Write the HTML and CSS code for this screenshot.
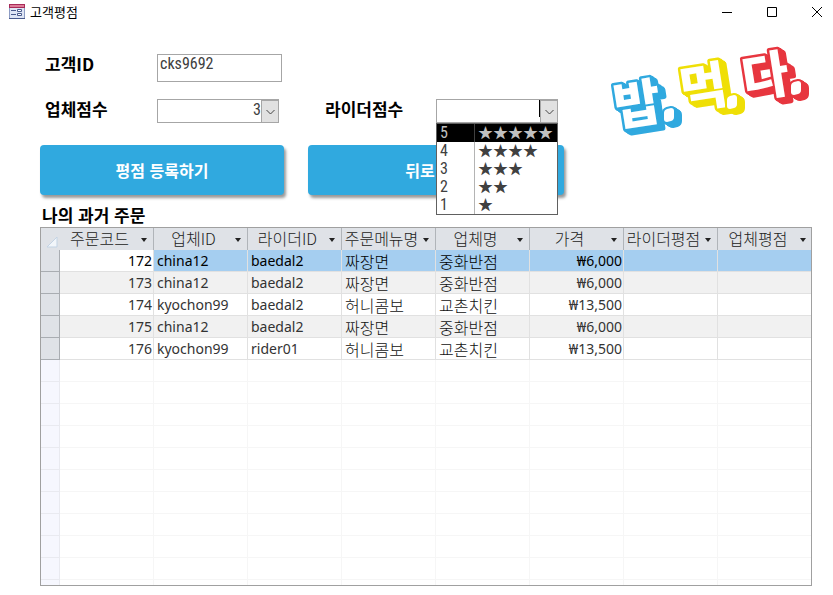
FILE: index.html
```html
<!DOCTYPE html>
<html lang="ko">
<head>
<meta charset="utf-8">
<meta name="viewport" content="width=device-width, initial-scale=1">
<title>고객평점</title>
<link rel="stylesheet" href="styles.css">
</head>
<body>
<header class="titlebar">
  <svg class="app-icon" width="16" height="16" viewBox="0 0 16 16" aria-hidden="true">
    <path fill="#dfe6f5" stroke="#8d9cc4" d="M.5 3.500h15v11H.5z"/>
    <path fill="#a82a58" d="M0 0h16v4H0z"/>
    <path fill="#dd7c98" d="M1 1h14v2H1z"/>
    <path fill="#4a5b8c" d="M2 6h5v1H2zM2 10h5v1H2zM0 14h16v1H0z"/>
    <path fill="#fff" stroke="#4a5b8c" d="M8.500 5.500h4v2h-4zM8.500 9.500h4v2h-4z"/>
  </svg>
  <h1 class="title">고객평점</h1>
  <div class="window-buttons">
    <button type="button" aria-label="최소화"><svg width="12" height="12" viewBox="0 0 12 12"><path d="M1 6.500h10"/></svg></button>
    <button type="button" aria-label="최대화"><svg width="12" height="12" viewBox="0 0 12 12"><path d="M1.500 1.500h9v9h-9z"/></svg></button>
    <button type="button" aria-label="닫기"><svg width="12" height="12" viewBox="0 0 12 12"><path d="M1 1l10 10M11 1L1 11"/></svg></button>
  </div>
</header>
<main>
  <div class="top">
    <form class="rating">
      <div class="fields">
        <label for="customer">고객ID</label>
        <input id="customer" class="field customer" type="text" value="cks9692">
        <label class="row-start" for="store-score">업체점수</label>
        <span class="combo">
          <select id="store-score" class="field">
            <option>5</option><option>4</option><option selected>3</option><option>2</option><option>1</option>
          </select>
          <span class="arrow"><svg width="9" height="6" viewBox="0 0 9 6"><path d="M.5 1l4 4 4-4"/></svg></span>
        </span>
        <label class="second" for="rider-score">라이더점수</label>
        <div class="combo">
          <input id="rider-score" class="field" type="text" role="combobox" aria-expanded="true" aria-controls="scores">
          <span class="caret"></span>
          <button type="button" class="arrow" aria-label="목록 열기"><svg width="9" height="6" viewBox="0 0 9 6"><path d="M.5 1l4 4 4-4"/></svg></button>
          <ul id="scores" class="menu" role="listbox">
            <li role="option" aria-selected="true"><span>5</span><span class="stars">★★★★★</span></li>
            <li role="option"><span>4</span><span class="stars">★★★★</span></li>
            <li role="option"><span>3</span><span class="stars">★★★</span></li>
            <li role="option"><span>2</span><span class="stars">★★</span></li>
            <li role="option"><span>1</span><span class="stars">★</span></li>
          </ul>
        </div>
      </div>
      <div class="actions">
        <button type="button">평점 등록하기</button>
        <button type="button" class="back">뒤로</button>
      </div>
    </form>
    <svg class="logo" width="200" height="96" viewBox="0 0 200 96" role="img" aria-label="밥.먹.다.">
      <g class="blue">
        <text x="5" y="80" transform="rotate(-9 5 80)">밥</text>
        <path d="M52 67q0-3 3-4l4-1q3 0 3 3v6q0 3-3 4l-4 1q-3 0-3-3z"/>
      </g>
      <g class="yellow">
        <text x="71" y="63" transform="rotate(-9 71 63)">먹</text>
        <path d="M115 54q0-3 3-4l4-1q3 0 3 3v6q0 3-3 4l-4 1q-3 0-3-3z"/>
      </g>
      <g class="red">
        <text x="133" y="52" transform="rotate(-9 133 52)">다</text>
        <path d="M179 40q0-3 3-4l4-1q3 0 3 3v6q0 3-3 4l-4 1q-3 0-3-3z"/>
      </g>
    </svg>
  </div>
  <h2 id="orders-title">나의 과거 주문</h2>
  <div class="frame">
    <table aria-labelledby="orders-title">
      <colgroup><col class="selector"><col span="8"></colgroup>
      <thead>
        <tr>
          <th class="corner"><svg width="12" height="12" viewBox="0 0 12 12" aria-hidden="true"><path fill="#f2f6fa" stroke="#c3d3e4" d="M11 1v10H1z"/></svg></th>
          <th scope="col"><div>주문코드</div></th>
          <th scope="col"><div>업체ID</div></th>
          <th scope="col"><div>라이더ID</div></th>
          <th scope="col"><div>주문메뉴명</div></th>
          <th scope="col"><div>업체명</div></th>
          <th scope="col"><div>가격</div></th>
          <th scope="col"><div>라이더평점</div></th>
          <th scope="col"><div>업체평점</div></th>
        </tr>
      </thead>
      <tbody class="orders">
        <tr class="selected"><td></td><td class="num">172</td><td>china12</td><td>baedal2</td><td class="ko">짜장면</td><td class="ko">중화반점</td><td class="num">₩6,000</td><td></td><td></td></tr>
        <tr><td></td><td class="num">173</td><td>china12</td><td>baedal2</td><td class="ko">짜장면</td><td class="ko">중화반점</td><td class="num">₩6,000</td><td></td><td></td></tr>
        <tr><td></td><td class="num">174</td><td>kyochon99</td><td>baedal2</td><td class="ko">허니콤보</td><td class="ko">교촌치킨</td><td class="num">₩13,500</td><td></td><td></td></tr>
        <tr><td></td><td class="num">175</td><td>china12</td><td>baedal2</td><td class="ko">짜장면</td><td class="ko">중화반점</td><td class="num">₩6,000</td><td></td><td></td></tr>
        <tr><td></td><td class="num">176</td><td>kyochon99</td><td>rider01</td><td class="ko">허니콤보</td><td class="ko">교촌치킨</td><td class="num">₩13,500</td><td></td><td></td></tr>
      </tbody>
      <tbody class="blank" aria-hidden="true">
        <tr><td></td><td></td><td></td><td></td><td></td><td></td><td></td><td></td><td></td></tr>
        <tr><td></td><td></td><td></td><td></td><td></td><td></td><td></td><td></td><td></td></tr>
        <tr><td></td><td></td><td></td><td></td><td></td><td></td><td></td><td></td><td></td></tr>
        <tr><td></td><td></td><td></td><td></td><td></td><td></td><td></td><td></td><td></td></tr>
        <tr><td></td><td></td><td></td><td></td><td></td><td></td><td></td><td></td><td></td></tr>
        <tr><td></td><td></td><td></td><td></td><td></td><td></td><td></td><td></td><td></td></tr>
        <tr><td></td><td></td><td></td><td></td><td></td><td></td><td></td><td></td><td></td></tr>
        <tr><td></td><td></td><td></td><td></td><td></td><td></td><td></td><td></td><td></td></tr>
        <tr><td></td><td></td><td></td><td></td><td></td><td></td><td></td><td></td><td></td></tr>
        <tr><td></td><td></td><td></td><td></td><td></td><td></td><td></td><td></td><td></td></tr>
        <tr><td></td><td></td><td></td><td></td><td></td><td></td><td></td><td></td><td></td></tr>
      </tbody>
    </table>
  </div>
</main>
</body>
</html>
```
FILE: styles.css
```css
* { box-sizing: border-box; }

body {
  margin: 0;
  height: 100vh;
  display: flex;
  flex-direction: column;
  background: #fff;
  color: #000;
  font-family: "Noto Sans CJK KR", sans-serif;
}

button { font: inherit; border: 0; padding: 0; background: none; }
h1, h2 { margin: 0; }

.titlebar {
  display: flex;
  align-items: center;
  gap: 5px;
  height: 24px;
  padding: 0 10px 0 9px;
}
.title { font-size: 13px; font-weight: 400; line-height: 24px; }
.window-buttons { display: flex; gap: 33px; margin-left: auto; }
.window-buttons button { width: 12px; height: 12px; display: flex; }
.window-buttons path { fill: none; stroke: #000; }

main {
  flex: 1;
  min-height: 0;
  display: flex;
  flex-direction: column;
  padding: 22px 21px 9px 40px;
}

.top { display: flex; justify-content: space-between; }
.rating { padding-top: 8px; }

.fields {
  display: grid;
  grid-template-columns: 117px 122px 157px 122px;
  grid-template-rows: 28px 24px;
  row-gap: 17px;
}
label {
  padding-left: 5px;
  font-size: 17px;
  font-weight: 700;
  line-height: 20px;
}
.row-start { grid-column: 1; }
.second { padding-left: 46px; }

.field {
  display: block;
  width: 100%;
  height: 100%;
  margin: 0;
  padding: 0 2px;
  border: 1px solid #a6a6a6;
  border-radius: 0;
  outline: 0;
  background: #fff;
  color: #404040;
  appearance: none;
  font: 16px "Roboto Condensed", Roboto, sans-serif;
}
.customer { width: 125px; padding-bottom: 9px; }

.combo { position: relative; }
select.field { padding-right: 17px; padding-bottom: 4px; text-align-last: right; }
.arrow {
  position: absolute;
  top: 1px;
  right: 0;
  bottom: 0;
  width: 18px;
  display: flex;
  align-items: center;
  justify-content: center;
  border: 1px solid #a6a6a6;
  background: #e1e1e1;
  pointer-events: none;
}
.arrow path { fill: none; stroke: #444; }
.caret { position: absolute; top: 1px; right: 18px; width: 1px; height: 17px; background: #000; }

.menu {
  position: absolute;
  z-index: 1;
  top: 100%;
  left: 0;
  right: 0;
  margin: 0;
  padding: 0;
  list-style: none;
  border: 1px solid #606060;
  background: #fff;
  color: #404040;
  font: 16px/18px "Roboto Condensed", Roboto, sans-serif;
}
.menu li { display: grid; grid-template-columns: 38px 1fr; height: 18px; }
.menu span { padding-left: 3px; border-right: 1px solid #b4b4b4; }
.menu .stars { padding-left: 3px; border: 0; font: 15px/16px "Noto Sans CJK KR", sans-serif; white-space: nowrap; }
.menu [aria-selected] { background: #000; color: #c0c0c0; }
.menu [aria-selected] span { border-color: #404040; }

.actions {
  display: grid;
  grid-template-columns: 244fr 256fr;
  gap: 24px;
  width: 524px;
  margin-top: 22px;
}
.actions button {
  height: 50px;
  border-radius: 4px;
  background: #30a9df;
  box-shadow: 2px 3px 3px #999;
  color: #fff;
  font-size: 16px;
  font-weight: 700;
}
.actions .back { padding-right: 32px; }

.logo { flex: none; overflow: visible; }
.logo text, .logo path {
  fill: #fff;
  stroke: currentColor;
  stroke-width: 5px;
  stroke-linejoin: round;
  paint-order: stroke;
}
.logo path { stroke-width: 4px; }
.logo text { font-size: 51px; font-weight: 900; }
.logo g {
  filter: drop-shadow(1px 1px 0 currentColor) drop-shadow(2px 1px 0 currentColor) drop-shadow(3px 2px 0 currentColor);
}
.blue { color: #30a9df; }
.yellow { color: #efdf06; }
.red { color: #e7363f; }

h2 { padding: 10px 0 2px 2px; font-size: 17px; font-weight: 700; line-height: 20px; }

.frame { flex: 1; min-height: 0; overflow: hidden; border: 1px solid #a0a0a0; }
table { width: calc(100% + 1px); table-layout: fixed; border-collapse: separate; border-spacing: 0; }
.selector { width: 19px; }
th, td { height: 22px; padding: 0 3px; white-space: nowrap; }
th {
  position: relative;
  padding: 0 14px 2px 0;
  border-right: 1px solid #b0b4b9;
  background: #dfe2e7;
  color: #222;
  font-size: 16px;
  font-weight: 300;
  line-height: 20px;
}
th div { display: flex; justify-content: center; }
th:last-child, td:last-child { border-right: 0; }
th div::after {
  content: "";
  position: absolute;
  top: 10px;
  right: 6px;
  border: solid transparent;
  border-width: 4px 3px 0;
  border-top-color: #222;
}
th.corner { padding: 5px 0 0 3px; border-right: 0; line-height: 0; }

td { border-right: 1px solid #e1e1e1; border-bottom: 1px solid #e1e1e1; color: #333; font: 14px/20px "Noto Sans", sans-serif; }
td.ko { color: #111; font: 300 16px/20px "Noto Sans CJK KR", sans-serif; }
td.num { padding-right: 1px; text-align: right; }
.orders tr:nth-child(even) { background: #f1f1f1; }
.orders td:first-child { background: #dfe2e7; border-color: #a9adb2; }
.orders .selected td { color: #000; }
.orders .selected td:nth-child(n+3) { background: #a5cef0; }
.blank td { border-color: #f6f6f6; }
.blank td:first-child { background: #f6f7fe; border-color: #e9eaf0; }
```
